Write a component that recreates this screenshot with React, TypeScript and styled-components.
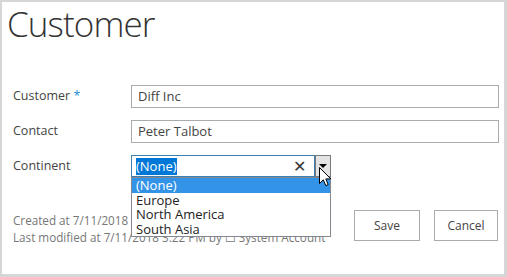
import React from 'react';
import styled, { createGlobalStyle } from 'styled-components';

const GlobalStyle = createGlobalStyle`
  html, body {
    margin: 0;
    padding: 0;
    background: #ffffff;
  }
  * {
    box-sizing: border-box;
  }
`;

const Frame = styled.div`
  width: 507px;
  height: 277px;
  border-style: solid;
  border-color: #d6d6d6;
  border-width: 2px 3px 3px 2px;
  background: #ffffff;
  font-family: 'Open Sans', 'Noto Sans', sans-serif;
  color: #444444;
  padding: 0 6px 0 11px;
  position: relative;
  overflow: hidden;
`;

const Title = styled.h1`
  margin: 0 0 0 -6px;
  font-family: 'Open Sans', sans-serif;
  font-weight: 300;
  font-size: 35px;
  line-height: 44px;
  color: #333333;
  letter-spacing: -0.9px;
`;

const Form = styled.div`
  display: grid;
  grid-template-columns: 118px 368px;
  row-gap: 12px;
  margin-top: 39px;
`;

const Label = styled.div`
  font-size: 12.5px;
  line-height: 16px;
  padding-top: 3px;
  color: #444444;
`;

const Required = styled.span`
  color: #2a8dd4;
`;

const TextBox = styled.div`
  height: 23px;
  border: 1px solid #ababab;
  padding: 0 6px;
  font-size: 13px;
  line-height: 21px;
  color: #444444;
`;

const ComboWrap = styled.div`
  position: relative;
  display: flex;
  width: 200px;
  height: 22px;
`;

const ComboInput = styled.div`
  flex: 1;
  display: flex;
  align-items: center;
  justify-content: space-between;
  border: 1px solid #3c7fb1;
  padding: 0 8px 0 4px;
  font-size: 13px;
`;

const Selected = styled.span`
  background: #0078d7;
  color: #ffffff;
  line-height: 17px;
`;

const Clear = styled.span`
  color: #333333;
  font-size: 16px;
  line-height: 16px;
`;

const ArrowButton = styled.div`
  width: 16px;
  border: 1px solid #7a7a7a;
  background: #e3e3e3;
  display: flex;
  align-items: center;
  justify-content: center;
`;

const Arrow = styled.div`
  width: 0;
  height: 0;
  border-left: 4px solid transparent;
  border-right: 4px solid transparent;
  border-top: 4px solid #000000;
`;

const List = styled.ul`
  position: absolute;
  top: 22px;
  left: 0;
  width: 200px;
  margin: 0;
  padding: 0;
  list-style: none;
  background: #ffffff;
  border: 1px solid #828790;
  z-index: 2;
`;

const Option = styled.li<{ active?: boolean }>`
  font-size: 13px;
  line-height: 14.5px;
  padding: 0 4px;
  color: ${(p) => (p.active ? '#ffffff' : '#222222')};
  background: ${(p) => (p.active ? '#3393e6' : 'transparent')};
`;

const Cursor = styled.svg`
  position: absolute;
  left: 188px;
  top: 12px;
  z-index: 3;
`;

const Footer = styled.div`
  display: flex;
  justify-content: space-between;
  align-items: flex-start;
  margin-top: 33px;
`;

const Meta = styled.div`
  font-size: 11.7px;
  line-height: 17px;
  color: #777777;
  padding-top: 2px;
`;

const Buttons = styled.div`
  display: flex;
  gap: 14px;
`;

const Button = styled.button<{ w: number }>`
  width: ${(p) => p.w}px;
  height: 31px;
  border: 1px solid #ababab;
  background: #ffffff;
  font-family: 'Open Sans', sans-serif;
  font-size: 12px;
  color: #444444;
  padding: 0;
`;

const continents = ['(None)', 'Europe', 'North America', 'South Asia'];

export default function App() {
  return (
    <>
      <GlobalStyle />
      <Frame>
        <Title>Customer</Title>
        <Form>
          <Label>
            Customer <Required>*</Required>
          </Label>
          <TextBox>Diff Inc</TextBox>
          <Label>Contact</Label>
          <TextBox>Peter Talbot</TextBox>
          <Label>Continent</Label>
          <ComboWrap>
            <ComboInput>
              <Selected>(None)</Selected>
              <Clear>✕</Clear>
            </ComboInput>
            <ArrowButton>
              <Arrow />
            </ArrowButton>
            <List>
              {continents.map((c, i) => (
                <Option key={c} active={i === 0}>
                  {c}
                </Option>
              ))}
            </List>
            <Cursor width="13" height="20" viewBox="0 0 13 20">
              <path
                d="M0.5 0.5 L0.5 16.5 L4.3 12.8 L6.8 18.6 L9.2 17.6 L6.8 11.9 L11.8 11.9 Z"
                fill="#ffffff"
                stroke="#000000"
                strokeWidth="1"
                strokeLinejoin="miter"
              />
            </Cursor>
          </ComboWrap>
        </Form>
        <Footer>
          <Meta>
            <div>Created at 7/11/2018 3:22 PM by System Account</div>
            <div>Last modified at 7/11/2018 3:22 PM by ☐ System Account</div>
          </Meta>
          <Buttons>
            <Button w={66}>Save</Button>
            <Button w={64}>Cancel</Button>
          </Buttons>
        </Footer>
      </Frame>
    </>
  );
}
